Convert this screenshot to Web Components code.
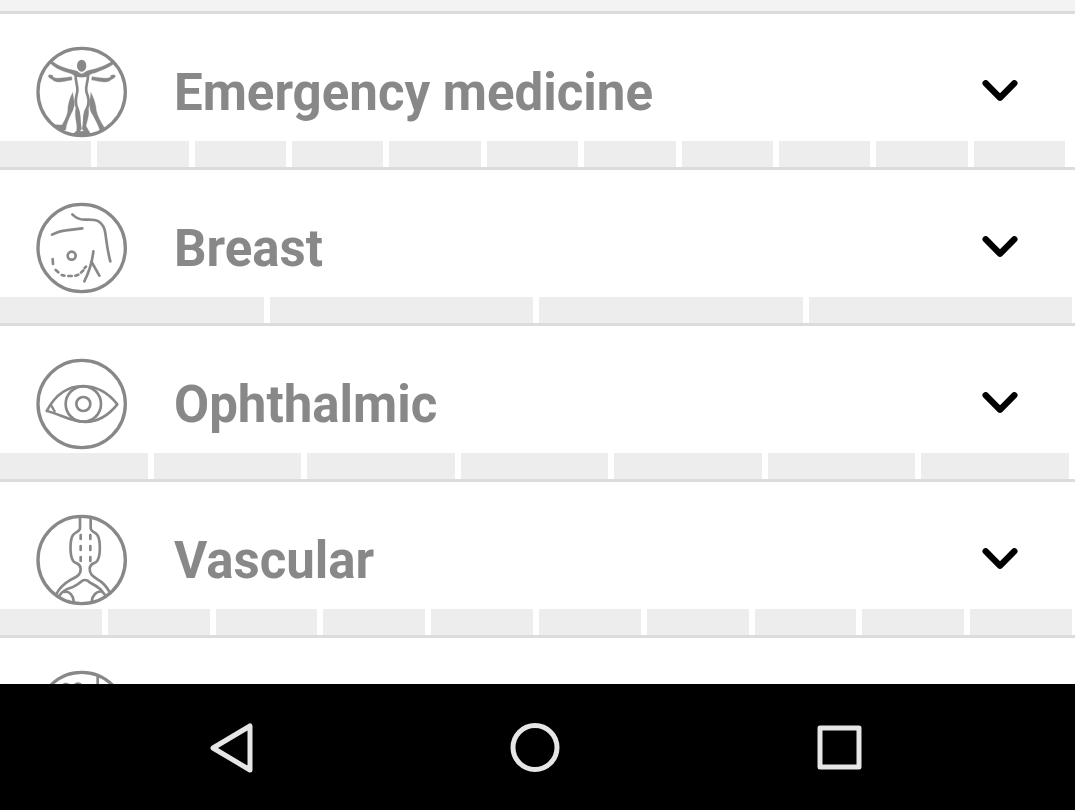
<!DOCTYPE html>
<html lang="en">
<head>
<meta charset="utf-8">
<meta name="viewport" content="width=device-width, initial-scale=1">
<title>Specialties</title>
<style>
  html, body { margin: 0; height: 100%; }
  body { font-family: Roboto, "Liberation Sans", sans-serif; background: #fff; }
</style>
</head>
<body>
<specialty-app></specialty-app>

<script>
const ICONS = {
  body: `
    <ellipse cx="155" cy="77" rx="14" ry="18" fill="currentColor" stroke="none"/>
    <g fill="currentColor" stroke="currentColor" stroke-width="1">
      <path d="M57 66 L66 63 C80 76 100 82 118 88 C132 91 144 93 147 98 Q155 104 163 98 C168 92 180 90 194 87 C212 82 232 74 247 64 L254 70 C234 84 212 92 196 98 C182 101 177 106 175 109 Q155 115 135 109 C132 104 122 100 110 97 C90 91 72 82 57 66Z"/>
      <path d="M55 108 Q57 102 68 106 L70 112 C82 118 103 112 125 110 L126 120 C104 123 86 130 71 122 C66 116 58 117 55 108Z"/>
      <path d="M256 108 Q254 102 243 106 L241 112 C229 118 208 112 186 110 L185 120 C207 123 225 130 240 122 C245 116 253 117 256 108Z"/>
      <path d="M128 158 L132 182 C135 200 128 212 123 222 C114 240 109 254 107 270 L92 270 L77 260 L76 254 L96 255 C105 240 109 232 113 216 C113 194 119 174 128 158Z"/>
      <path d="M183 158 C191 174 198 192 199 212 C202 228 213 246 222 261 L228 267 L214 276 L210 273 C208 260 196 240 188 224 C179 212 178 198 180 180Z"/>
      <path d="M139 200 C149 213 150 225 149 243 L151 274 L160 274 L162 243 C160 225 163 213 174 200 C180 220 171 242 168 258 L177 274 L183 283 L128 283 L140 272 C144 250 130 226 139 200Z"/>
    </g>
    <path d="M137 107 C136 126 144 138 142 154 C138 172 133 188 142 205 C150 220 146 242 151 266 M174 107 C174 126 166 138 169 154 C175 172 180 188 171 205 C160 220 165 242 160 266" stroke-width="8"/>`,
  breast: `
    <path d="M127 55 C138 66 148 71 163 71 C189 70 203 71 213 82 C232 101 223 129 241 196"/>
    <path d="M66 116 C82 108 91 104 108 103 L157 97"/>
    <circle cx="125" cy="179" r="12"/>
    <path d="M190 166 C187 196 177 228 163 256 M184 196 L208 239"/>
    <path d="M68 189 L69 204 M77 222 L85 229 M95 237 L103 239 M115 240 L125 240 M136 239 L145 236 M153 230 L160 223 M164 216 L168 212"/>`,
  eye: `
    <path d="M50 177 C77 126 116 102 160 102 C201 103 234 121 262 157 C235 191 206 209 166 210 C119 209 85 184 50 177Z"/>
    <path d="M62 158 L74 178" stroke-width="7"/>
    <circle cx="160" cy="156" r="53"/>
    <circle cx="160" cy="156" r="21"/>`,
  vessel: `
    <path d="M150 27 V61 C149 72 136 71 129 81 C119 96 119 143 129 158 C137 169 150 164 152 181 C153 202 139 207 119 217 C99 229 87 242 79 258"/>
    <path d="M182 27 V61 C183 72 195 71 202 81 C212 96 212 143 202 158 C194 169 181 164 179 181 C178 202 193 207 212 220 C225 230 234 243 241 256"/>
    <path d="M152 81 V93 M181 81 V93 M152 114 V126 M181 114 V126 M152 147 V159 M181 147 V159"/>
    <path d="M87 264 Q98 247 120 240 C137 235 147 226 157 218 Q165 214 173 218 C186 230 207 235 216 250 L228 264"/>
    <path d="M103 252 C119 248 130 263 131 280 M216 251 C199 248 187 263 185 280"/>`,
  torso: `
    <path d="M203 34 V74 C203 120 186 170 190 270"/>
    <path d="M93 70 Q105 54 117 64 M136 62 Q147 54 156 66"/>`
};

customElements.define('specialty-icon', class extends HTMLElement {
  connectedCallback() {
    this.attachShadow({ mode: 'open' }).innerHTML = `
      <style>
        :host { display: block; flex: none; width: 92px; height: 92px; color: #888; }
        svg { display: block; width: 100%; height: 100%; }
      </style>
      <svg viewBox="18 18 276 276" fill="none" stroke="currentColor" stroke-width="8" stroke-linecap="round" stroke-linejoin="round" aria-hidden="true">
        <circle cx="155" cy="156" r="131" stroke-width="10"/>
        ${ICONS[this.getAttribute('name')]}
      </svg>`;
  }
});

customElements.define('progress-segments', class extends HTMLElement {
  connectedCallback() {
    const count = Number(this.getAttribute('count'));
    this.attachShadow({ mode: 'open' }).innerHTML = `
      <style>
        :host { display: grid; grid-template-columns: repeat(${count}, 1fr); gap: 6px; height: 26px; padding-right: var(--segments-end, 3px); }
        i { background: #ededed; }
      </style>
      ${'<i></i>'.repeat(count)}`;
  }
});

customElements.define('specialty-row', class extends HTMLElement {
  connectedCallback() {
    this.attachShadow({ mode: 'open' }).innerHTML = `
      <style>
        :host { display: block; flex: none; background: #fff; border-bottom: 3px solid #dcdcdc; }
        button { display: flex; align-items: center; gap: 46px; width: 100%; box-sizing: border-box; margin: 0;
          padding: 32px 55px 3px 36px; border: 0; background: none; color: #888; font: bold 51px/60px Roboto, "Liberation Sans", sans-serif;
          text-align: left; cursor: pointer; }
        .title { flex: 1; min-width: 0; padding-top: 2px; }
        .chevron { flex: none; width: 40px; height: 24px; color: #000; }
      </style>
      <button type="button" aria-expanded="false">
        <specialty-icon name="${this.getAttribute('icon')}"></specialty-icon>
        <span class="title"><slot></slot></span>
        <svg class="chevron" viewBox="60 60 120 72" fill="none" stroke="currentColor" stroke-width="19" stroke-linecap="round" stroke-linejoin="round" aria-hidden="true"><path d="M77 70 L120 113 L163 70"/></svg>
      </button>
      <progress-segments count="${this.getAttribute('segments')}"></progress-segments>`;
  }
});

customElements.define('system-nav', class extends HTMLElement {
  connectedCallback() {
    this.attachShadow({ mode: 'open' }).innerHTML = `
      <style>
        :host { display: block; flex: none; background: #000; }
        nav { display: grid; grid-template-columns: repeat(3, 1fr); height: 126px; padding: 0 84px 0 80px; }
        button { display: flex; align-items: center; justify-content: center; margin: 0; padding: 0; border: 0; background: none; color: #e6e6e6; cursor: pointer; }
        svg { width: 52px; height: 52px; }
      </style>
      <nav aria-label="System">
        <button type="button" aria-label="Back"><svg viewBox="0 0 52 52" fill="none" stroke="currentColor" stroke-width="5" stroke-linejoin="round"><path d="M7 27 L44 5 V49Z"/></svg></button>
        <button type="button" aria-label="Home"><svg viewBox="0 0 52 52" fill="none" stroke="currentColor" stroke-width="5"><circle cx="26" cy="26.500" r="22"/></svg></button>
        <button type="button" aria-label="Recent apps"><svg viewBox="0 0 52 52" fill="none" stroke="currentColor" stroke-width="5" stroke-linejoin="round"><path d="M7 7 H46 V46 H7Z"/></svg></button>
      </nav>`;
  }
});

customElements.define('specialty-app', class extends HTMLElement {
  connectedCallback() {
    this.attachShadow({ mode: 'open' }).innerHTML = `
      <style>
        :host { display: flex; flex-direction: column; height: 100%; }
        main { display: flex; flex-direction: column; flex: 1; min-height: 0; overflow: hidden; }
        header { flex: none; height: 11px; background: #f3f3f3; border-bottom: 3px solid #dcdcdc; }
        .wide { --segments-end: 10px; }
        .mid { --segments-end: 6px; }
      </style>
      <main>
        <header></header>
        <specialty-row class="wide" icon="body" segments="11">Emergency medicine</specialty-row>
        <specialty-row icon="breast" segments="4">Breast</specialty-row>
        <specialty-row class="mid" icon="eye" segments="7">Ophthalmic</specialty-row>
        <specialty-row icon="vessel" segments="10">Vascular</specialty-row>
        <specialty-row icon="torso" segments="6"></specialty-row>
      </main>
      <system-nav></system-nav>`;
  }
});
</script>
</body>
</html>
